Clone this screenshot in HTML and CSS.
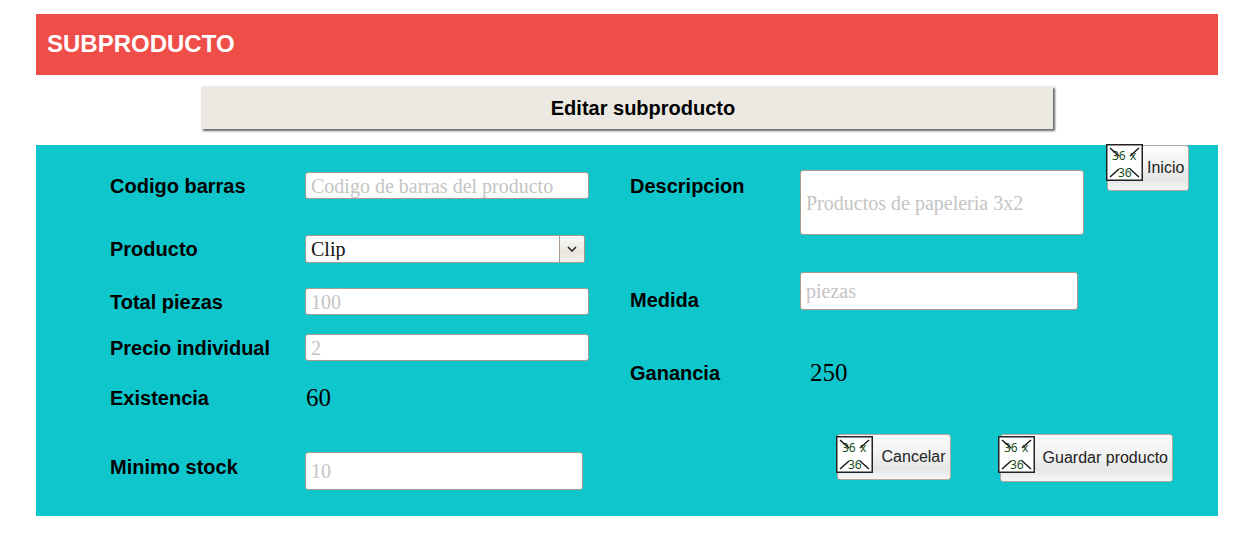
FILE: index.html
```html
<!DOCTYPE html>
<html lang="es">
<head>
<meta charset="utf-8">
<meta name="viewport" content="width=device-width, initial-scale=1">
<title>Subproducto</title>
<link rel="stylesheet" href="styles.css">
</head>
<body>
<header class="banner"><h1 class="banner-title">SUBPRODUCTO</h1></header>
<main class="page">
  <h2 class="subtitle">Editar subproducto</h2>
  <form class="panel">
    <div class="column column-main">
      <div class="row">
        <label class="label" for="codigo">Codigo barras</label>
        <input class="field" id="codigo" type="text" placeholder="Codigo de barras del producto">
      </div>
      <div class="row row-product">
        <label class="label" for="producto">Producto</label>
        <div class="select-wrap">
          <select class="select" id="producto"><option>Clip</option></select>
          <span class="arrow"><svg width="10" height="6" viewBox="0 0 10 6" aria-hidden="true"><path d="M1 1l4 4 4-4" fill="none" stroke="#222" stroke-width="1.5"/></svg></span>
        </div>
      </div>
      <div class="row row-total">
        <label class="label" for="total">Total piezas</label>
        <input class="field" id="total" type="text" placeholder="100">
      </div>
      <div class="row row-price">
        <label class="label" for="precio">Precio individual</label>
        <input class="field" id="precio" type="text" placeholder="2">
      </div>
      <div class="row row-stock">
        <span class="label">Existencia</span>
        <output class="value">60</output>
      </div>
      <div class="row row-minimum">
        <label class="label" for="minimo">Minimo stock</label>
        <input class="field field-medium" id="minimo" type="text" placeholder="10">
      </div>
    </div>
    <div class="column column-detail">
      <div class="row row-top">
        <label class="label" for="descripcion">Descripcion</label>
        <input class="field field-tall" id="descripcion" type="text" placeholder="Productos de papeleria 3x2">
      </div>
      <div class="row row-measure">
        <label class="label" for="medida">Medida</label>
        <input class="field field-medium" id="medida" type="text" placeholder="piezas">
      </div>
      <div class="row row-profit">
        <span class="label">Ganancia</span>
        <output class="value value-inset">250</output>
      </div>
    </div>
    <button class="button button-home" type="button">
      <svg class="icon" viewBox="0 0 37 37" aria-hidden="true">
        <rect class="icon-frame" x="0.75" y="0.75" width="35.5" height="35.5"/>
        <text class="glyph" x="6" y="16">36</text><text class="glyph" x="24" y="16">x</text>
        <text class="glyph" x="12" y="33">36</text>
        <path class="icon-lines" d="M4 4l9 8M33 4l-9 8M4 33l9-8M33 33l-9-8"/>
      </svg>Inicio
    </button>
    <div class="actions">
      <button class="button button-cancel" type="button">
        <svg class="icon" viewBox="0 0 37 37" aria-hidden="true">
          <rect class="icon-frame" x="0.75" y="0.75" width="35.5" height="35.5"/>
          <text class="glyph" x="6" y="16">36</text><text class="glyph" x="24" y="16">x</text>
          <text class="glyph" x="12" y="33">36</text>
          <path class="icon-lines" d="M4 4l9 8M33 4l-9 8M4 33l9-8M33 33l-9-8"/>
        </svg>Cancelar
      </button>
      <button class="button button-save" type="submit">
        <svg class="icon" viewBox="0 0 37 37" aria-hidden="true">
          <rect class="icon-frame" x="0.75" y="0.75" width="35.5" height="35.5"/>
          <text class="glyph" x="6" y="16">36</text><text class="glyph" x="24" y="16">x</text>
          <text class="glyph" x="12" y="33">36</text>
          <path class="icon-lines" d="M4 4l9 8M33 4l-9 8M4 33l9-8M33 33l-9-8"/>
        </svg>Guardar producto
      </button>
    </div>
  </form>
</main>
</body>
</html>
```

FILE: styles.css
```css
* { box-sizing: border-box; }

body {
  margin: 0;
  padding: 14px 32px 24px 36px;
  background: #fff;
  color: #000;
  font-family: "Liberation Sans", Arial, sans-serif;
}

.banner { background: #ef4d48; padding: 16px 11px 17px; }
.banner-title { margin: 0; color: #fff; font-size: 24px; line-height: 28px; }

.subtitle {
  width: 72%;
  margin: 11px auto 16px;
  padding: 10px 36px 9px 68px;
  background: #ece9e2;
  box-shadow: 2px 2px 2px #666;
  font-size: 20px;
  line-height: 24px;
  text-align: center;
}

.panel {
  display: grid;
  grid-template-columns: 520fr 477fr 111fr;
  grid-template-rows: auto 1fr;
  padding-left: 74px;
  background: #0fc6cd;
}

.column { display: flex; flex-direction: column; }
.column-main { grid-row: 1 / 3; padding: 27px 0 26px; }
.column-detail { padding-top: 25px; }

.row {
  display: grid;
  grid-template-columns: 195px minmax(0, 284px);
  align-items: center;
}
.column-detail .row { grid-template-columns: 170px minmax(0, 284px); }
.row-product { margin-top: 36px; }
.row-total { margin-top: 25px; }
.row-price { margin-top: 19px; }
.row-stock { margin-top: 23px; }
.row-minimum { margin-top: 40px; }
.row-minimum .label { padding-bottom: 8px; }
.row-top { align-items: start; }
.row-top .label { padding-top: 4px; }
.row-measure { margin-top: 35px; }
.row-measure .label { padding-top: 18px; }
.row-profit { margin-top: 47px; }

.label { font-size: 20px; font-weight: bold; line-height: 24px; }

.field,
.select {
  width: 100%;
  height: 27px;
  margin: 0;
  padding: 2px 5px 0;
  border: 1px solid #a89a8c;
  border-radius: 3px;
  background: #fff;
  color: #111;
  font-family: "Liberation Serif", "Times New Roman", serif;
  font-size: 20px;
}
.field::placeholder { color: #c4c4c4; opacity: 1; }
.field-medium { width: 278px; max-width: 100%; height: 38px; padding-top: 0; }
.field-tall { height: 65px; }

.select-wrap { display: grid; max-width: 280px; }
.select { grid-area: 1 / 1; height: 28px; padding: 0 28px 0 5px; appearance: none; }
.arrow {
  grid-area: 1 / 1;
  justify-self: end;
  display: flex;
  align-items: center;
  justify-content: center;
  width: 25px;
  margin: 1px;
  border-left: 1px solid #a89a8c;
  border-radius: 0 2px 2px 0;
  background: linear-gradient(#fbfaf8, #e8e5dd 65%, #f5f3ef);
  pointer-events: none;
}

.value {
  font-family: "Liberation Serif", "Times New Roman", serif;
  font-size: 25px;
  line-height: 28px;
  padding-left: 1px;
}
.value-inset { padding-left: 10px; }

.button {
  display: flex;
  align-items: center;
  height: 46px;
  padding: 0 4px 0 0;
  border: 1px solid #b5a79a;
  border-radius: 3px;
  background: linear-gradient(#fcfcfc, #f2f2f2 45%, #e5e5e5 75%, #f7f7f7);
  color: #222;
  font-family: "Liberation Sans", Arial, sans-serif;
  font-size: 16px;
  white-space: nowrap;
}
.button-home { justify-self: start; }
.button-save { height: 48px; }

.icon { flex: none; align-self: flex-start; width: 37px; height: 37px; margin: 1px 9px 0 -2px; }
.button-home .icon { margin: -2px 4px 0 -2px; }
.button-save .icon { margin: 1px 8px 0 -3px; }
.icon-frame { fill: #fff; stroke: #222; stroke-width: 1.5; }
.icon-lines { fill: none; stroke: #111; stroke-width: 1.4; }
.glyph { font: 12px "Noto Sans", sans-serif; fill: #174d17; }

.actions {
  grid-column: 2 / 4;
  display: flex;
  justify-content: flex-end;
  align-items: flex-start;
  align-self: end;
  gap: 49px;
  padding: 0 45px 34px 0;
}
```
